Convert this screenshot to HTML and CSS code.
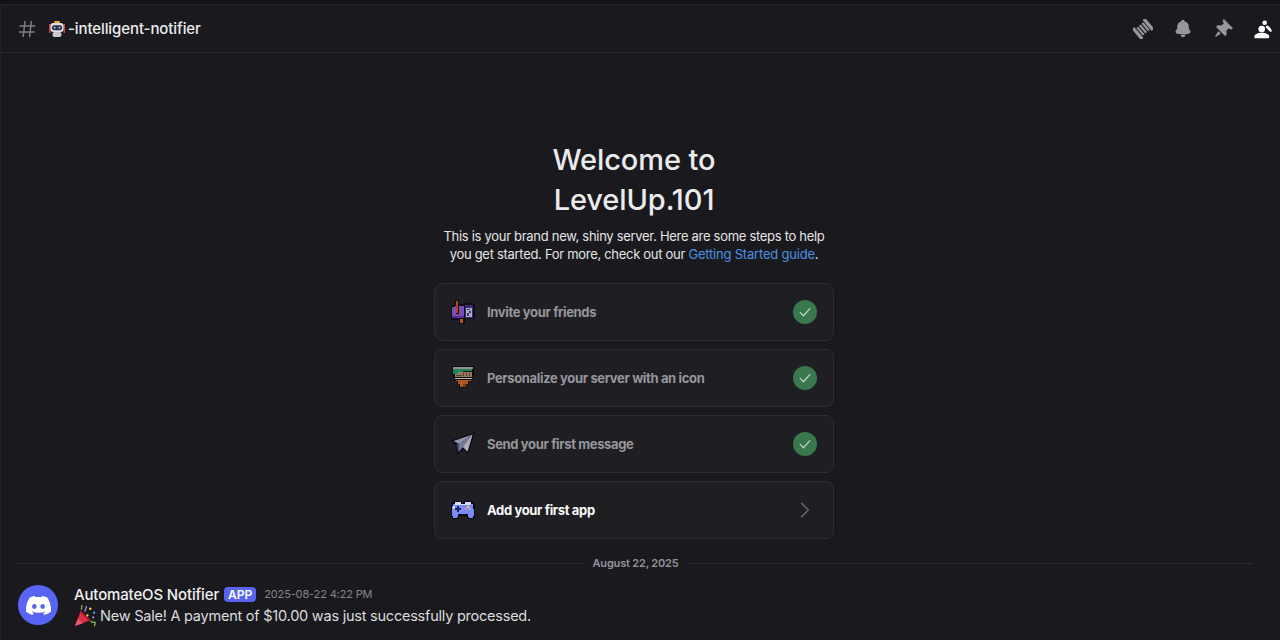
FILE: index.html
```html
<!DOCTYPE html>
<html lang="en">
<head>
  <meta charset="UTF-8" />
  <title>LevelUp.101 - intelligent-notifier</title>
  <link rel="stylesheet" href="styles.css">
</head>
<body>
<div class="topstrip"></div>
<div class="channel">
  <header class="bar">
    <div class="bar-title">
      <svg class="hash" viewBox="0 0 18 18"><path fill="none" stroke="currentColor" stroke-width="1.5" stroke-linecap="round" d="M7 1.5 5.2 16.5M13.4 1.5l-1.8 15M2 6h14.6M1.4 12h14.6"/></svg>
      <svg class="robot" viewBox="0 0 18 18">
        <rect x="1" y="4" width="1.4" height="9" fill="#d8433f"/>
        <rect x="15.6" y="4" width="1.4" height="9" fill="#d8433f"/>
        <rect x="6" y="1" width="6" height="2" rx="1" fill="#f0a92c"/>
        <rect x="2.4" y="3" width="13.2" height="9" rx="3" fill="#dfdde6"/>
        <rect x="4" y="5.2" width="10" height="5" rx="2" fill="#2b2f4a"/>
        <circle cx="6.6" cy="7.7" r="1" fill="#7fd4f2"/>
        <circle cx="11.4" cy="7.7" r="1" fill="#7fd4f2"/>
        <rect x="4.5" y="12" width="9" height="5" rx="2" fill="#c9c6d4"/>
      </svg>
      <span class="bar-name">-intelligent-notifier</span>
    </div>
    <div class="bar-tools">
      <svg class="tool" viewBox="0 0 24 24"><g fill="currentColor" transform="rotate(50 12 12)"><rect x="3.5" y="1.5" width="17" height="4" rx=".6"/><rect x="6" y="6.6" width="12" height="2.6" rx=".5"/><rect x="6" y="10.6" width="12" height="2.6" rx=".5"/><rect x="6" y="14.6" width="12" height="2.6" rx=".5"/><rect x="3.5" y="18.4" width="17" height="4" rx=".6"/></g></svg>
      <svg class="tool" viewBox="0 0 24 24"><path fill="currentColor" d="M9.7 2.89c.18-.07.32-.24.37-.43a2 2 0 0 1 3.86 0c.05.2.19.36.38.43A7 7 0 0 1 19 9.5v2.09c0 .12.05.24.13.33l1.1 1.22a3 3 0 0 1 .77 2.01v.28c0 .67-.34 1.29-.95 1.56-1.31.6-4 1.51-8.05 1.51-4.05 0-6.74-.91-8.05-1.5-.61-.28-.95-.9-.95-1.57v-.28a3 3 0 0 1 .77-2l1.1-1.23a.5.5 0 0 0 .13-.33V9.5a7 7 0 0 1 4.7-6.61Z"/><path fill="currentColor" d="M9.18 19.84c-.11-.32.2-.6.54-.57a33.3 33.3 0 0 0 4.56 0c.34-.03.65.25.54.57a3 3 0 0 1-5.64 0Z"/></svg>
      <svg class="tool" viewBox="0 0 24 24"><path fill="currentColor" d="M19.38 11.38a3 3 0 0 0 4.24 0l.03-.03a.5.5 0 0 0 0-.7L13.35.35a.5.5 0 0 0-.7 0l-.03.03a3 3 0 0 0 0 4.24L13 5l-2.92 2.92-3.65-.34a2 2 0 0 0-1.6.58l-.62.63a1 1 0 0 0 0 1.42l9.58 9.58a1 1 0 0 0 1.42 0l.63-.63a2 2 0 0 0 .58-1.6l-.34-3.64L19 11l.38.38ZM9.07 17.07a.5.5 0 0 1-.08.77l-5.15 3.43a.5.5 0 0 1-.63-.06l-.42-.42a.5.5 0 0 1-.06-.63L6.16 15a.5.5 0 0 1 .77-.08l2.14 2.15Z"/></svg>
      <svg class="tool tool-on" viewBox="0 0 24 24"><circle cx="10.5" cy="12" r="4" fill="currentColor"/><path fill="currentColor" d="M1.5 22c0-3.8 3.6-5.6 9-5.6s9 1.8 9 5.6c0 .6-.4 1-1 1h-16c-.6 0-1-.4-1-1Z"/><circle cx="14" cy="4.5" r="2.8" fill="currentColor"/><path fill="currentColor" d="M15.6 8.6c1-1 2.2-.8 3.2 0 1.6 1.4 3.2 3.4 3.7 5.2.3 1.3-1.2 2.1-2.2 1.2-1.5-1.5-3-3.2-4.6-4.6-.6-.5-.6-1.2-.1-1.8Z"/></svg>
    </div>
  </header>

  <main class="feed">
    <section class="welcome">
      <h1 class="welcome-title">Welcome to<br>LevelUp.101</h1>
      <p class="welcome-text">This is your brand new, shiny server. Here are some steps to help you get started. For more, check out our <a href="#guide">Getting Started guide</a>.</p>
      <ul class="steps">
        <li class="step step-done">
          <svg class="step-icon" viewBox="0 0 24 24" shape-rendering="crispEdges">
            <path fill="#0d0b12" d="M0 6h1V5h3V0h4v4h6V3h8v1h2v15h-9v1h-1v4H8v-4H1v-1H0Z"/>
            <path fill="#8a58cc" d="M1 7h3v-1h1v8h3V6h5v12H1Z"/>
            <path fill="#5f35a8" d="M1 16h12v2H1Z"/>
            <path fill="#46288c" d="M14 5h8v13h-8Z"/>
            <path fill="#c3c8e4" d="M15 8h6v9h-6Z"/>
            <path fill="#3b3f78" d="M16 9h3v1h-3ZM18 11h2v2h-2ZM16 13h2v3h-2Z"/>
            <path fill="#cf4a2c" d="M5 1h2v12H5Z"/>
            <path fill="#c9651f" d="M9 19h3v4H9Z"/>
          </svg>
          <span class="step-label">Invite your friends</span>
          <span class="check"><svg viewBox="0 0 24 24"><path fill="none" stroke="currentColor" stroke-width="1.6" stroke-linecap="round" stroke-linejoin="round" d="M5.5 12.5 10 17l8.5-9.5"/></svg></span>
        </li>
        <li class="step step-done">
          <svg class="step-icon" viewBox="0 0 24 24" shape-rendering="crispEdges">
            <path fill="#0d0b12" d="M1 0h22v10h-1v2h-1v3h-3v3h-2v4H8v-4H6v-3H3v-3H2V8H1Z"/>
            <path fill="#a8a69a" d="M2 1h20v2H2Z"/>
            <path fill="#23946a" d="M2 3h19v2h-9v1H7v2H2Z"/>
            <path fill="#a88a66" d="M4 8h3V6h14v5H4Z"/>
            <path fill="#5d4433" d="M12 7h1v3h-1ZM15 7h1v3h-1ZM18 7h1v3h-1ZM5 9h6v1H5Z"/>
            <path fill="#d8d2bf" d="M4 12h17v1H4Z"/>
            <path fill="#c8651f" d="M5 14h15v1h-3v3h-2v3H9v-3H7v-3H5Z"/>
            <path fill="#8e4114" d="M12 18h3v3h-3Z"/>
          </svg>
          <span class="step-label">Personalize your server with an icon</span>
          <span class="check"><svg viewBox="0 0 24 24"><path fill="none" stroke="currentColor" stroke-width="1.6" stroke-linecap="round" stroke-linejoin="round" d="M5.5 12.5 10 17l8.5-9.5"/></svg></span>
        </li>
        <li class="step step-done">
          <svg class="step-icon" viewBox="0 0 24 24">
            <polygon fill="#0d0b12" points="24,0 0,8.5 4.5,13 6.5,23 12,17.5 17.5,22"/>
            <polygon fill="#a6a9c4" points="21.5,2.5 2.5,9 8,12"/>
            <polygon fill="#8689a8" points="21.5,2.5 8,12 8,19.5 12,15 16.5,19.5"/>
            <polygon fill="#c4c6d8" points="21.5,2.5 12,15 16.5,19.5"/>
            <polygon fill="#3f4fa6" points="5.5,12.5 8,12 8,19.5 7.2,20.5"/>
          </svg>
          <span class="step-label">Send your first message</span>
          <span class="check"><svg viewBox="0 0 24 24"><path fill="none" stroke="currentColor" stroke-width="1.6" stroke-linecap="round" stroke-linejoin="round" d="M5.5 12.5 10 17l8.5-9.5"/></svg></span>
        </li>
        <li class="step">
          <svg class="step-icon" viewBox="0 0 24 24" shape-rendering="crispEdges">
            <path fill="#0d0b12" d="M3 3h8v1h2V3h8v1h2v3h1v12h-1v2h-6v-1h-1v-2h-8v2H8v1H1v-2H0V7h1V4h2Z"/>
            <path fill="#7a8af2" d="M2 6h20v5h1v7h-1v2h-4v-1h-1v-3H7v3H6v1H2v-2H1V8h1Z"/>
            <path fill="#d5dbfd" d="M4 4h6v2h4V4h6v3H4ZM2 8h2v3H2Z"/>
            <path fill="#20245e" d="M6 8h2v2h2v2H8v2H6v-2H4v-2h2Z"/>
            <path fill="#f0d35a" d="M16 8h2v2h-2Z"/>
            <path fill="#6fd3a1" d="M18 10h2v2h-2Z"/>
            <path fill="#ef7fa8" d="M14 10h2v2h-2Z"/>
          </svg>
          <span class="step-label">Add your first app</span>
          <svg class="chevron" viewBox="0 0 24 24"><path fill="none" stroke="currentColor" stroke-width="2" stroke-linecap="round" stroke-linejoin="round" d="m8 4 8 8-8 8"/></svg>
        </li>
      </ul>
    </section>

    <div class="divider"><span class="divider-date">August 22, 2025</span></div>

    <article class="msg">
      <div class="avatar">
        <svg viewBox="0 0 24 24"><path fill="currentColor" d="M20.317 4.3698a19.7913 19.7913 0 00-4.8851-1.5152.0741.0741 0 00-.0785.0371c-.211.3753-.4447.8648-.6083 1.2495-1.8447-.2762-3.68-.2762-5.4868 0-.1636-.3933-.4058-.8742-.6177-1.2495a.077.077 0 00-.0785-.037 19.7363 19.7363 0 00-4.8852 1.515.0699.0699 0 00-.0321.0277C.5334 9.0458-.319 13.5799.0992 18.0578a.0824.0824 0 00.0312.0561c2.0528 1.5076 4.0413 2.4228 5.9929 3.0294a.0777.0777 0 00.0842-.0276c.4616-.6304.8731-1.2952 1.226-1.9942a.076.076 0 00-.0416-.1057c-.6528-.2476-1.2743-.5495-1.8722-.8923a.077.077 0 01-.0076-.1277c.1258-.0943.2517-.1923.3718-.2914a.0743.0743 0 01.0776-.0105c3.9278 1.7933 8.18 1.7933 12.0614 0a.0739.0739 0 01.0785.0095c.1202.099.246.1981.3728.2924a.077.077 0 01-.0066.1276 12.2986 12.2986 0 01-1.873.8914.0766.0766 0 00-.0407.1067c.3604.698.7719 1.3628 1.225 1.9932a.076.076 0 00.0842.0286c1.961-.6067 3.9495-1.5219 6.0023-3.0294a.077.077 0 00.0313-.0552c.5004-5.177-.8382-9.6739-3.5485-13.6604a.061.061 0 00-.0312-.0286zM8.02 15.3312c-1.1825 0-2.1569-1.0857-2.1569-2.419 0-1.3332.9555-2.4189 2.157-2.4189 1.2108 0 2.1757 1.0952 2.1568 2.419 0 1.3332-.9555 2.4189-2.1569 2.4189zm7.9748 0c-1.1825 0-2.1569-1.0857-2.1569-2.419 0-1.3332.9554-2.4189 2.1569-2.4189 1.2108 0 2.1757 1.0952 2.1568 2.419 0 1.3332-.946 2.4189-2.1568 2.4189Z"/></svg>
      </div>
      <div class="msg-body">
        <div class="msg-head">
          <span class="msg-author">AutomateOS Notifier</span>
          <span class="app-tag">APP</span>
          <time class="msg-time">2025-08-22 4:22 PM</time>
        </div>
        <div class="msg-text">
          <svg class="popper" viewBox="0 0 24 24">
            <path fill="#dd2e44" d="M1 23 7 7l10 10Z"/>
            <path fill="#ea596e" d="M1 23l3-8 5 5Z"/>
            <path fill="#b01030" d="M7 7l10 10-1.5.6L6.5 8.5Z"/>
            <path fill="none" stroke="#77b255" stroke-width="1.4" d="M8 6C7 4 9 3 8 1M17 18c2 0 2 2 4 1s1 3 0 4"/>
            <path fill="none" stroke="#aa8dd8" stroke-width="1.4" d="M11 8c1-2 2-3 2-6"/>
            <circle cx="17" cy="5" r="1.3" fill="#ffcc4d"/>
            <circle cx="21" cy="9" r="1.2" fill="#55acee"/>
            <circle cx="14" cy="12" r="1.2" fill="#ffcc4d"/>
            <circle cx="20" cy="14" r="1.1" fill="#aa8dd8"/>
          </svg>
          <span>New Sale! A payment of $10.00 was just successfully processed.</span>
        </div>
      </div>
    </article>
  </main>
</div>
</body>
</html>
```

FILE: styles.css
```css
* { box-sizing: border-box; }
html, body { height: 100%; }
body {
  margin: 0;
  overflow: hidden;
  display: flex;
  flex-direction: column;
  background: #121214;
  color: #dfe0e2;
  font-family: 'Inter', 'Noto Sans', sans-serif;
}
.topstrip { height: 4px; flex: none; }
.channel {
  flex: 1;
  display: flex;
  flex-direction: column;
  background: #1a1a1e;
  border-top: 1px solid #222226;
  border-left: 1px solid #222226;
  min-height: 0;
}
.bar {
  height: 48px;
  flex: none;
  display: flex;
  align-items: center;
  justify-content: space-between;
  padding: 0 7px 0 17px;
  border-bottom: 1px solid #29292e;
}
.bar-title { display: flex; align-items: center; }
.hash { width: 18px; height: 18px; color: #7d7d85; margin-right: 12px; }
.robot { width: 18px; height: 18px; margin-right: 2px; }
.bar-name { font-size: 15px; font-weight: 500; letter-spacing: -0.1px; color: #ececee; }
.bar-tools { display: flex; align-items: center; gap: 20px; }
.tool { width: 20px; height: 20px; color: #96969f; }
.tool-on { color: #fff; }

.feed { flex: 1; display: flex; flex-direction: column; min-height: 0; }
.welcome {
  width: 400px;
  margin: 87px 0 0 433px;
}
.welcome-title {
  margin: 0;
  text-align: center;
  font-size: 29px;
  line-height: 40px;
  font-weight: 500;
  letter-spacing: -0.1px;
  color: #ebebed;
}
.welcome-text {
  margin: 7px 0 20px;
  text-align: center;
  font-size: 13px;
  line-height: 18px;
  letter-spacing: -0.3px;
  color: #e4e4e7;
}
.welcome-text a { color: #4a90e2; text-decoration: none; letter-spacing: -0.2px; }
.steps {
  list-style: none;
  margin: 0;
  padding: 0;
  display: flex;
  flex-direction: column;
  gap: 8px;
}
.step {
  height: 58px;
  display: flex;
  align-items: center;
  padding: 0 16px;
  background: #1f1f23;
  border: 1px solid #2c2c31;
  border-radius: 8px;
}
.step-icon { width: 24px; height: 24px; flex: none; margin-right: 12px; }
.step-label {
  flex: 1;
  font-size: 13px;
  font-weight: 700;
  letter-spacing: -0.35px;
  color: #fbfbfb;
}
.step-done .step-label { color: #96969c; }
.step-done .step-icon { opacity: .85; }
.check {
  width: 24px;
  height: 24px;
  border-radius: 50%;
  background: #39784d;
  color: #c5d3c8;
  display: flex;
  align-items: center;
  justify-content: center;
}
.check svg { width: 18px; height: 18px; }
.chevron { width: 20px; height: 20px; color: #5f5f66; margin-right: 2px; }

.divider {
  margin: 16px 27px 0 17px;
  height: 17px;
  display: flex;
  align-items: center;
  justify-content: center;
}
.divider::before,
.divider::after {
  content: "";
  flex: 1;
  height: 1px;
  background: #29292e;
}
.divider-date {
  padding: 0 7px;
  margin-bottom: 2px;
  font-size: 11px;
  font-weight: 600;
  letter-spacing: -0.18px;
  color: #94949b;
}

.msg { display: flex; padding: 13px 0 0 17px; }
.avatar {
  width: 40px;
  height: 40px;
  flex: none;
  margin-right: 16px;
  border-radius: 50%;
  background: #5865f2;
  color: #fff;
  display: flex;
  align-items: center;
  justify-content: center;
}
.avatar svg { width: 25px; height: 25px; }
.msg-body { min-width: 0; }
.msg-head { display: flex; align-items: center; height: 20px; margin-top: -1px; }
.msg-author { font-size: 15px; font-weight: 500; letter-spacing: -0.15px; color: #f0f0f2; }
.app-tag {
  margin-left: 5px;
  padding: 0 4px;
  height: 15px;
  line-height: 15px;
  border-radius: 4px;
  background: #5865f2;
  color: #fff;
  font-size: 12px;
  font-weight: 600;
}
.msg-time { margin-left: 8px; font-size: 11px; letter-spacing: -0.15px; color: #85858e; }
.msg-text { display: flex; align-items: center; height: 22px; font-size: 14.5px; letter-spacing: -0.23px; color: #dcdcdf; }
.popper { width: 23px; height: 23px; margin-right: 3px; flex: none; }
```
